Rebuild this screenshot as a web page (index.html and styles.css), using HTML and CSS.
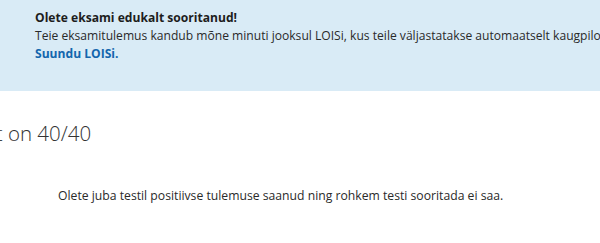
FILE: index.html
```html
<!DOCTYPE html>
<html lang="et">
<head>
<meta charset="utf-8">
<link rel="stylesheet" href="styles.css">
</head>
<body>
<div class="alert">
  <p class="alert-title">Olete eksami edukalt sooritanud!</p>
  <p class="alert-text">Teie eksamitulemus kandub mõne minuti jooksul LOISi, kus teile väljastatakse automaatselt kaugpiloodi tunnistus.</p>
  <a class="alert-link" href="#">Suundu LOISi.</a>
</div>
<div class="result">
  <h2 class="score">Sooritatud test on 40/40</h2>
  <p class="note">Olete juba testil positiivse tulemuse saanud ning rohkem testi sooritada ei saa.</p>
</div>
</body>
</html>
```
FILE: styles.css
```css
html, body {
  margin: 0;
  padding: 0;
  background: #ffffff;
  overflow: hidden;
}
body {
  width: 600px;
  height: 243px;
  font-family: "Open Sans", "Noto Sans", sans-serif;
  color: #252525;
}
.alert {
  background: #d9ebf6;
  height: 91px;
  box-sizing: border-box;
  padding: 9px 0 0 35px;
  white-space: nowrap;
  overflow: hidden;
  font-size: 12.1px;
  line-height: 18px;
}
.alert p {
  margin: 0;
}
.alert-title {
  font-weight: 700;
  color: #1d1d1d;
}
.alert-text {
  color: #2a2a2a;
}
.alert-link {
  display: block;
  font-weight: 700;
  color: #1366ad;
  text-decoration: none;
}
.result {
  padding-top: 24px;
  overflow: hidden;
}
.score {
  margin: 0 0 0 -134px;
  font-size: 20.5px;
  font-weight: 300;
  line-height: 36px;
  color: #333333;
  white-space: nowrap;
}
.note {
  margin: 36px 0 0 58px;
  font-size: 12.2px;
  line-height: 18px;
  color: #2a2a2a;
}
```
